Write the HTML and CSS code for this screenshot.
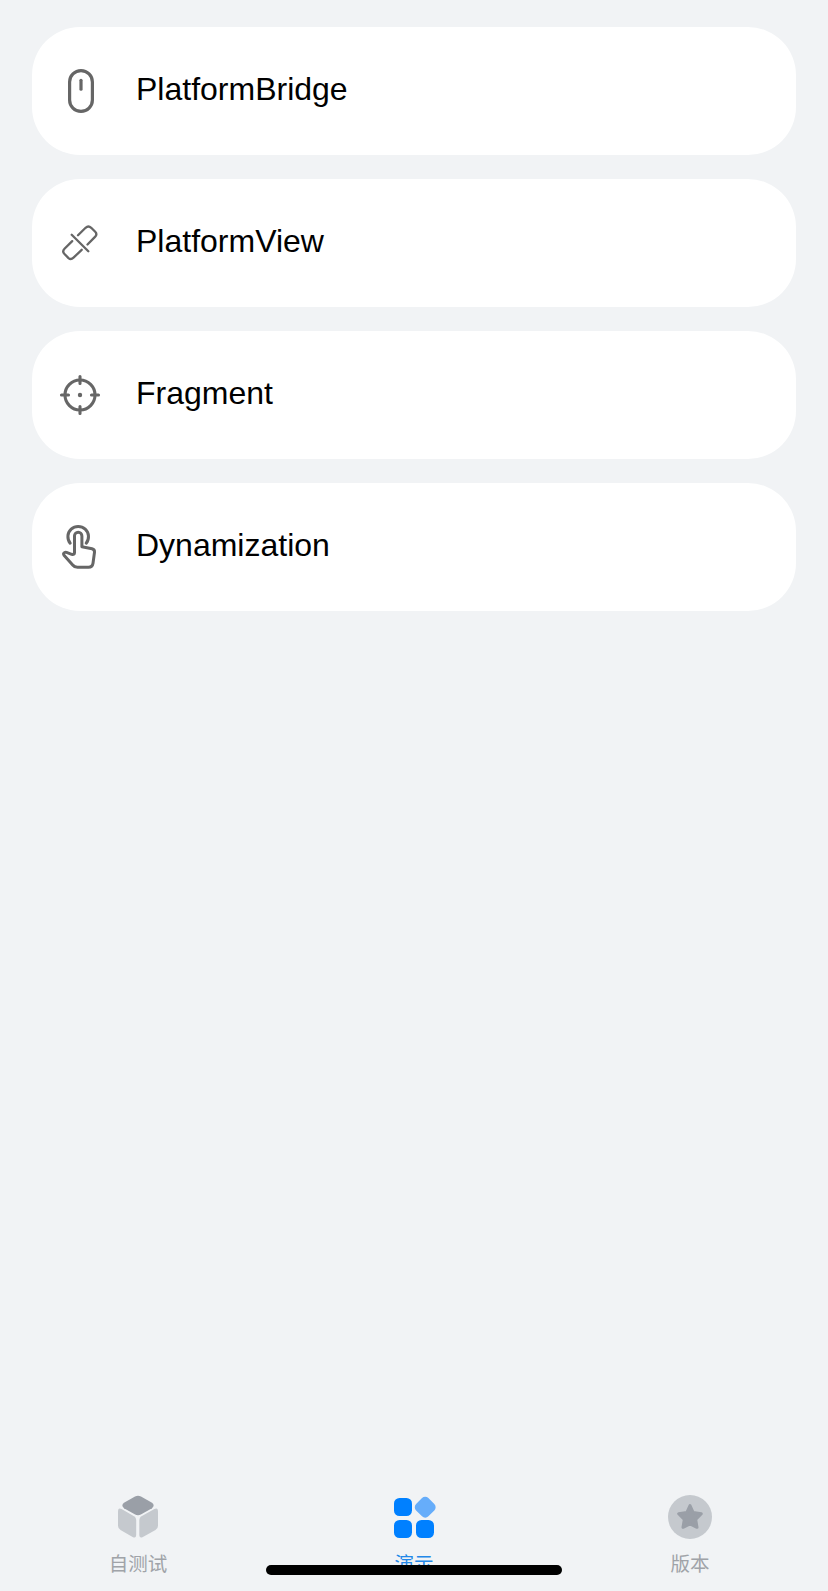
FILE: index.html
```html
<!DOCTYPE html>
<html lang="zh-CN">
<head>
<meta charset="utf-8">
<title>演示</title>
<link rel="stylesheet" href="styles.css">
</head>
<body>
<main class="list">
  <a class="card">
    <svg class="icon" viewBox="0 0 70 70"><g stroke-width="3.2"><rect x="19.6" y="14.6" width="22.8" height="40.8" rx="11.4"/><path d="M31 24.3v8.9"/></g></svg>
    <span class="name">PlatformBridge</span>
  </a>
  <a class="card">
    <svg class="icon" viewBox="0 0 70 70"><g stroke-width="2.3"><path d="M21.7 26.700 38.300 43.300M28 27.300l7.600-7.500Q38.400 17.200 41.200 19.800L45.200 23.800Q47.600 26.300 45 28.900L37.500 36.500M22.200 33.100 14.500 40.800Q12 43.300 14.300 45.800L18.500 50.100Q20.900 52.100 23.500 49.700L31.700 41.800"/></g></svg>
    <span class="name">PlatformView</span>
  </a>
  <a class="card">
    <svg class="icon" viewBox="0 0 70 70"><g stroke-width="3.1"><circle cx="30" cy="35" r="15"/><path d="M30 16.500v7M30 46.500v7M11.500 35h7M41.500 35h7"/></g><circle class="dot" cx="30" cy="35" r="2.200"/></svg>
    <span class="name">Fragment</span>
  </a>
  <a class="card">
    <svg class="icon" viewBox="0 0 70 70"><g stroke-width="3"><path d="M20.200 31.200A10.300 10.300 0 1 1 36.200 31.200"/><path d="M24.500 40.700V23.900a3.700 3.700 0 0 1 7.400 0V34.800L42 36.800Q44.800 37.500 44.500 40.300L43 51.300Q42.400 55.300 38.500 55.300H27.500Q24.500 55.300 22.700 53L14 43.300Q12.800 41.400 14.600 40.500Q15.400 40.100 16.500 40.400L21.700 42.300Q24.500 43 24.500 40.700Z"/></g></svg>
    <span class="name">Dynamization</span>
  </a>
</main>
<nav class="tabs">
  <a class="tab">
    <svg class="glyph" viewBox="0 0 50 50">
      <path class="dark" d="M22 4.500Q25 2.900 28 4.500L39 10.800Q42.300 13.500 39 16.200L28.300 22.300Q25 24.100 21.700 22.300L11 16.200Q7.700 13.500 11 10.800Z"/>
      <path class="pale" d="M5 19.500Q5 15.300 8.600 17.100L21 24.300Q23.200 25.600 23.200 28V42.500Q23.200 46.700 19.600 44.900L7.500 38Q5 36.500 5 33.800Z"/>
      <path class="pale" d="M45 19.500Q45 15.300 41.400 17.100L28.500 24.300Q26.300 25.600 26.300 28V42.500Q26.300 46.700 29.900 44.900L42.500 38Q45 36.500 45 33.800Z"/>
    </svg>
    <span class="label">自测试</span>
  </a>
  <a class="tab active">
    <svg class="glyph" viewBox="0 0 50 50">
      <rect class="blue" x="5" y="6" width="18" height="18" rx="5.500"/>
      <rect class="blue" x="5" y="28" width="18" height="18" rx="5.500"/>
      <rect class="blue" x="27" y="28" width="18" height="18" rx="5.500"/>
      <rect class="sky" x="27.500" y="6.500" width="17.400" height="17.400" rx="4.500" transform="rotate(45 36.200 15.200)"/>
    </svg>
    <span class="label">演示</span>
  </a>
  <a class="tab">
    <svg class="glyph" viewBox="0 0 50 50">
      <circle class="pale" cx="25" cy="25" r="22"/>
      <path class="dark star" d="M25 13.500 28.200 20.500 36.300 21.800 30.700 27.500 32 35.300 25 31.900 18 35.300 19.300 27.500 13.700 21.800 21.800 20.500Z"/>
    </svg>
    <span class="label">版本</span>
  </a>
  <div class="home-indicator"></div>
</nav>
</body>
</html>
```
FILE: styles.css
```css
* { box-sizing: border-box; }
body {
  margin: 0;
  height: 1591px;
  display: flex;
  flex-direction: column;
  justify-content: space-between;
  background: #f1f3f5;
  font-family: "Liberation Sans", "Noto Sans CJK SC", sans-serif;
  overflow: hidden;
}
.list {
  display: flex;
  flex-direction: column;
  gap: 24px;
  padding: 27px 32px 0;
}
.card {
  display: flex;
  align-items: center;
  gap: 16px;
  height: 128px;
  padding-left: 18px;
  border-radius: 48px;
  background: #fff;
}
.icon {
  width: 70px;
  height: 70px;
  fill: none;
  stroke: #666;
  stroke-linecap: round;
  stroke-linejoin: round;
}
.dot { fill: #666; stroke: none; }
.name {
  padding-bottom: 4px;
  font-size: 32px;
  color: #000;
}
.tabs {
  position: relative;
  display: flex;
  height: 99px;
}
.tab {
  flex: 1;
  display: flex;
  flex-direction: column;
  align-items: center;
  color: #a0a3a8;
}
.active { color: #2388e8; }
.glyph { width: 50px; height: 50px; }
.label {
  margin-top: 8px;
  font-size: 19.5px;
  line-height: 28px;
  font-weight: 400;
}
.pale { fill: #c5c9ce; }
.dark { fill: #9a9fa7; }
.star { stroke: #9a9fa7; stroke-width: 3; stroke-linejoin: round; }
.blue { fill: #0080ff; }
.sky { fill: #66adfa; }
.home-indicator {
  position: absolute;
  left: 266px;
  bottom: 16px;
  width: 296px;
  height: 10px;
  border-radius: 5px;
  background: #000;
}
```
